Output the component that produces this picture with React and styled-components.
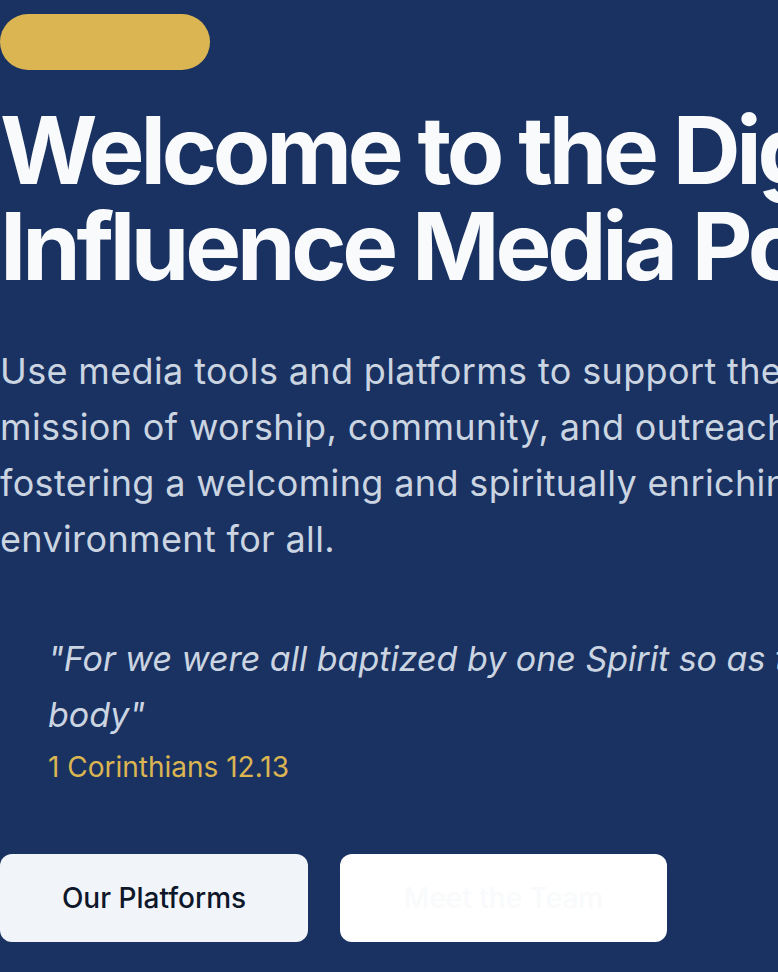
import React from 'react';
import styled, { createGlobalStyle } from 'styled-components';

const GlobalStyle = createGlobalStyle`
  html, body {
    margin: 0;
    padding: 0;
    background-color: #1a3261;
  }

  body {
    font-family: Inter, 'Noto Sans', 'Liberation Sans', sans-serif;
    -webkit-font-smoothing: antialiased;
  }
`;

const HeroSection = styled.section`
  background-color: #1a3261;
  min-height: 972px;
  overflow: hidden;
`;

const Container = styled.div`
  width: 1000px;
  padding-top: 14px;
`;

const Badge = styled.div`
  width: 210px;
  height: 56px;
  border-radius: 9999px;
  background-color: #dab552;
  margin-bottom: 32px;
`;

const Title = styled.h1`
  margin: 0 0 49px;
  width: 1200px;
  font-size: 94px;
  line-height: 96px;
  font-weight: 700;
  letter-spacing: -0.045em;
  color: #f8fafc;
`;

const Lead = styled.p`
  margin: 0 0 64px;
  max-width: 945px;
  font-size: 36px;
  line-height: 56px;
  letter-spacing: 0.01em;
  color: #cbd5e1;
`;

const Quote = styled.blockquote`
  margin: 0 0 67px;
  padding-left: 48px;
  width: 1000px;
`;

const QuoteText = styled.p`
  margin: 0;
  font-size: 34px;
  line-height: 56px;
  font-style: italic;
  color: #cbd5e1;
`;

const Reference = styled.cite`
  display: block;
  margin-top: 4px;
  font-size: 28px;
  line-height: 40px;
  font-style: normal;
  color: #dab552;
`;

const Actions = styled.div`
  display: flex;
  gap: 32px;
`;

const Button = styled.a`
  display: flex;
  align-items: center;
  justify-content: center;
  box-sizing: border-box;
  width: ${(p) => p.$width}px;
  height: 88px;
  border-radius: 12px;
  font-size: 28px;
  font-weight: 500;
  text-decoration: none;
  background-color: ${(p) => (p.$variant === 'outline' ? '#ffffff' : '#f1f5f9')};
  color: ${(p) => (p.$variant === 'outline' ? '#f8fafc' : '#0f172a')};
`;

const App = () => {
  return (
    <>
      <GlobalStyle />
      <HeroSection>
        <Container>
          <Badge />
          <Title>
            Welcome to the Digital
            <br />
            Influence Media Portal
          </Title>
          <Lead>
            Use media tools and platforms to support the church's mission of worship,
            community, and outreach, fostering a welcoming and spiritually enriching
            environment for all.
          </Lead>
          <Quote>
            <QuoteText>
              "For we were all baptized by one Spirit so as to form one body"
            </QuoteText>
            <Reference>1 Corinthians 12.13</Reference>
          </Quote>
          <Actions>
            <Button href="#platforms" $width={308}>Our Platforms</Button>
            <Button href="#team" $variant="outline" $width={327}>Meet the Team</Button>
          </Actions>
        </Container>
      </HeroSection>
    </>
  );
};

export default App;
